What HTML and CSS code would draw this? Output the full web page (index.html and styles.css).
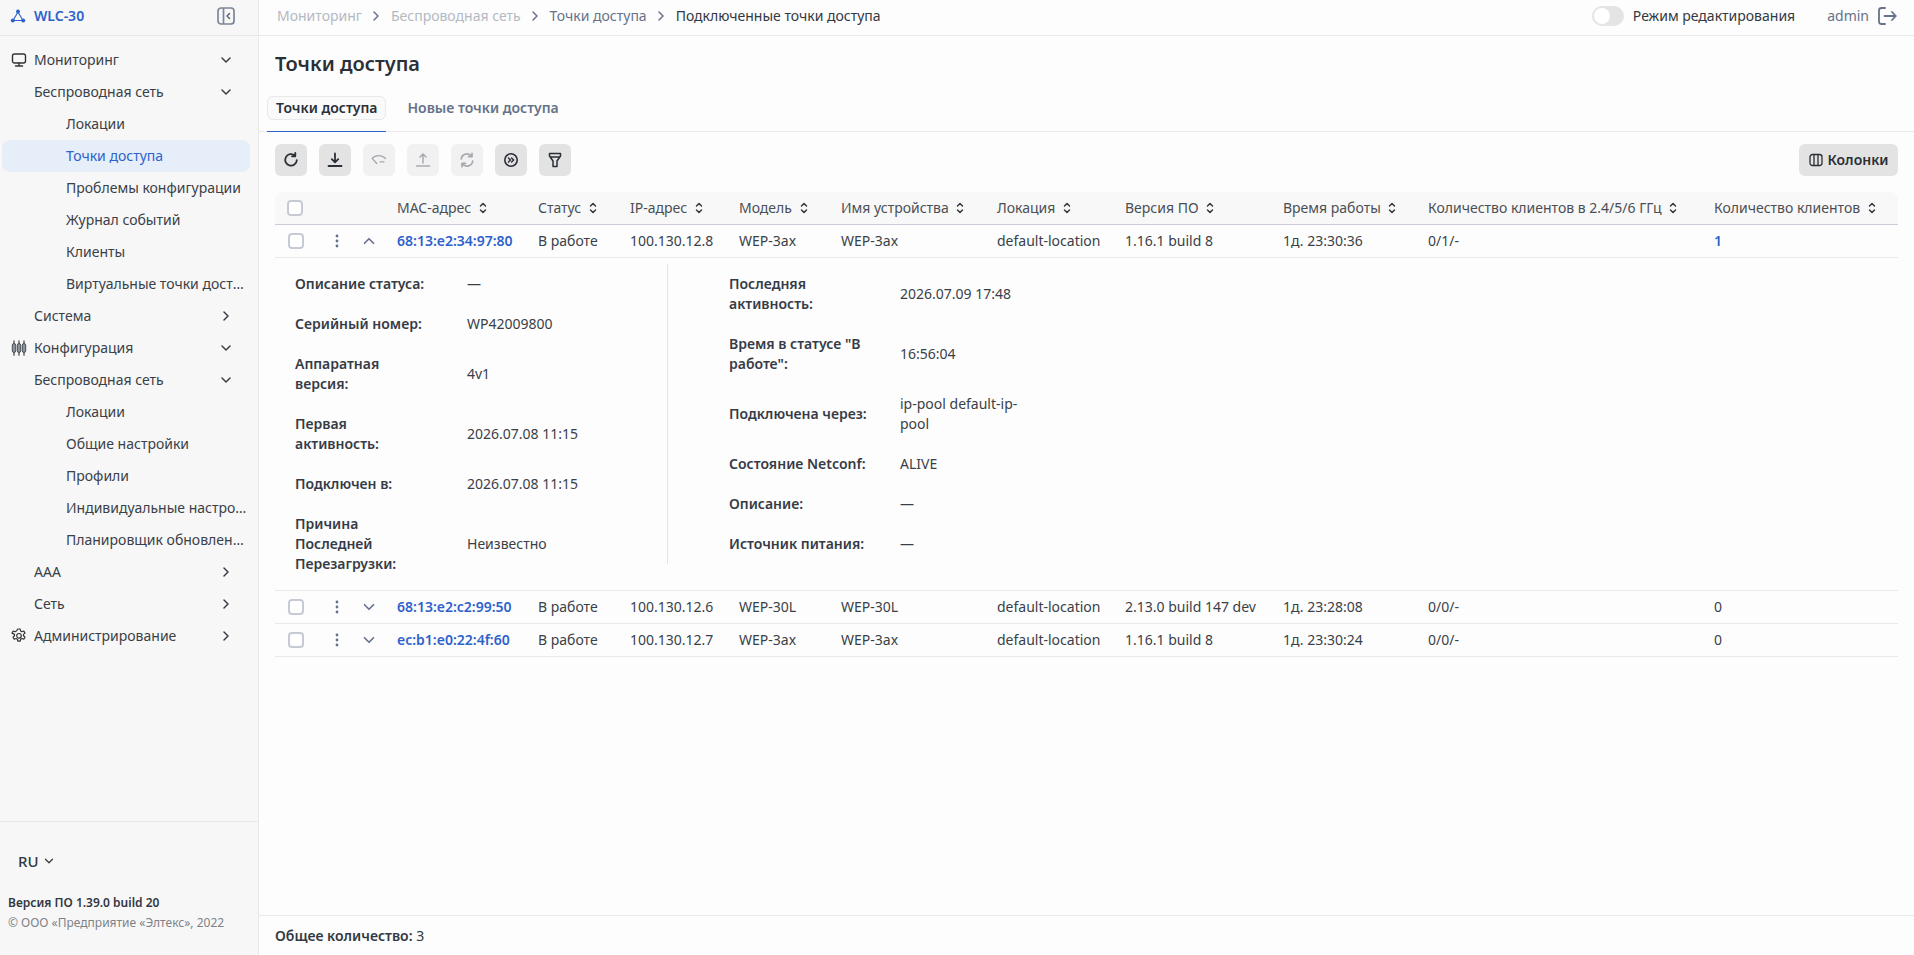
FILE: index.html
```html
<!DOCTYPE html>
<html lang="ru">
<head>
  <meta charset="UTF-8">
  <title>Точки доступа</title>
  <link rel="stylesheet" href="styles.css">
</head>
<body>
  <svg class="sprite" width="0" height="0">
    <symbol id="chev-down" viewBox="0 0 16 16"><path d="M4 6l4 4 4-4" fill="none" stroke="currentColor" stroke-width="1.5" stroke-linecap="round" stroke-linejoin="round"/></symbol>
    <symbol id="chev-right" viewBox="0 0 16 16"><path d="M6 4l4 4-4 4" fill="none" stroke="currentColor" stroke-width="1.5" stroke-linecap="round" stroke-linejoin="round"/></symbol>
    <symbol id="sort" viewBox="0 0 16 16"><path d="M5.500 6L8 3.500 10.500 6M5.500 10L8 12.500 10.500 10" fill="none" stroke="currentColor" stroke-width="1.500" stroke-linecap="round" stroke-linejoin="round"/></symbol>
    <symbol id="dots" viewBox="0 0 16 16"><circle cx="8" cy="3" r="1.400" fill="currentColor"/><circle cx="8" cy="8" r="1.400" fill="currentColor"/><circle cx="8" cy="13" r="1.400" fill="currentColor"/></symbol>
  </svg>

  <aside class="sidebar">
    <div class="side-top">
      <div class="brand">
        <svg width="16" height="16" viewBox="0 0 16 16"><path d="M8 4L3 12.500h10z" fill="none" stroke="#2d62cc" stroke-width="1.100"/><circle cx="8" cy="3.500" r="2" fill="#2d62cc"/><circle cx="2.800" cy="12.500" r="2" fill="#2d62cc"/><circle cx="13.200" cy="12.500" r="2" fill="#2d62cc"/></svg>
        <span>WLC-30</span>
      </div>
      <svg class="collapse" width="18" height="18" viewBox="0 0 18 18"><rect x="1" y="1" width="16" height="16" rx="3" fill="none" stroke="#7b8699" stroke-width="1.700"/><path d="M6.500 1v16" stroke="#7b8699" stroke-width="1.700"/><path d="M12.500 6.500L10 9l2.500 2.500" fill="none" stroke="#5a6475" stroke-width="1.500" stroke-linecap="round" stroke-linejoin="round"/></svg>
    </div>
    <nav class="menu">
      <div class="mi">
        <svg class="mi-icon" width="16" height="16" viewBox="0 0 16 16"><rect x="1.500" y="2" width="13" height="9" rx="2" fill="none" stroke="#333" stroke-width="1.400"/><path d="M8 11v3M4.500 14h7" stroke="#333" stroke-width="1.400" stroke-linecap="round"/></svg>
        <span class="mi-text">Мониторинг</span><svg class="chev"><use href="#chev-down"/></svg>
      </div>
      <div class="mi lvl2"><span class="mi-text">Беспроводная сеть</span><svg class="chev"><use href="#chev-down"/></svg></div>
      <div class="mi lvl3"><span class="mi-text">Локации</span></div>
      <div class="mi lvl3 active"><span class="mi-text">Точки доступа</span></div>
      <div class="mi lvl3"><span class="mi-text">Проблемы конфигурации</span></div>
      <div class="mi lvl3"><span class="mi-text">Журнал событий</span></div>
      <div class="mi lvl3"><span class="mi-text">Клиенты</span></div>
      <div class="mi lvl3"><span class="mi-text">Виртуальные точки доступа</span></div>
      <div class="mi lvl2"><span class="mi-text">Система</span><svg class="chev"><use href="#chev-right"/></svg></div>
      <div class="mi">
        <svg class="mi-icon" width="16" height="16" viewBox="0 0 16 16"><g stroke="#4a4f57" stroke-width="1.300" stroke-linecap="round"><path d="M3 .8v14.400M8 .8v14.400M13 .8v14.400"/></g><g fill="#8d929a" stroke="#4a4f57" stroke-width="1"><rect x="1.300" y="3.500" width="3.400" height="9" rx="1.700"/><rect x="6.300" y="3.500" width="3.400" height="9" rx="1.700"/><rect x="11.300" y="3.500" width="3.400" height="9" rx="1.700"/></g></svg>
        <span class="mi-text">Конфигурация</span><svg class="chev"><use href="#chev-down"/></svg>
      </div>
      <div class="mi lvl2"><span class="mi-text">Беспроводная сеть</span><svg class="chev"><use href="#chev-down"/></svg></div>
      <div class="mi lvl3"><span class="mi-text">Локации</span></div>
      <div class="mi lvl3"><span class="mi-text">Общие настройки</span></div>
      <div class="mi lvl3"><span class="mi-text">Профили</span></div>
      <div class="mi lvl3"><span class="mi-text">Индивидуальные настройки</span></div>
      <div class="mi lvl3"><span class="mi-text">Планировщик обновлений</span></div>
      <div class="mi lvl2"><span class="mi-text">AAA</span><svg class="chev"><use href="#chev-right"/></svg></div>
      <div class="mi lvl2"><span class="mi-text">Сеть</span><svg class="chev"><use href="#chev-right"/></svg></div>
      <div class="mi">
        <svg class="mi-icon" width="16" height="16" viewBox="0 0 16 16"><path d="M6.800 1h2.400l.4 2 1.300.7 1.900-.7 1.200 2.100-1.500 1.300v1.400l1.500 1.300-1.200 2.100-1.900-.7-1.300.7-.4 2H6.800l-.4-2-1.300-.7-1.900.7-1.200-2.100 1.500-1.300V6.400L1 5.100l1.200-2.100 1.900.7 1.300-.7z" fill="none" stroke="#333" stroke-width="1.200" stroke-linejoin="round"/><circle cx="8" cy="7.800" r="2.300" fill="none" stroke="#333" stroke-width="1.200"/></svg>
        <span class="mi-text">Администрирование</span><svg class="chev"><use href="#chev-right"/></svg>
      </div>
    </nav>
    <div class="side-bottom">
      <div class="lang">RU <svg class="chev"><use href="#chev-down"/></svg></div>
      <div class="version">Версия ПО 1.39.0 build 20</div>
      <div class="copy">© ООО «Предприятие «Элтекс», 2022</div>
    </div>
  </aside>

  <div class="main">
    <header class="topbar">
      <div class="crumbs">
        <span class="dim">Мониторинг</span><svg class="sep"><use href="#chev-right"/></svg>
        <span class="dim">Беспроводная сеть</span><svg class="sep"><use href="#chev-right"/></svg>
        <span class="mid">Точки доступа</span><svg class="sep"><use href="#chev-right"/></svg>
        <span>Подключенные точки доступа</span>
      </div>
      <div class="top-right">
        <span class="switch"><i></i></span>
        <span class="edit">Режим редактирования</span>
        <span class="user">admin</span>
        <svg width="20" height="20" viewBox="0 0 20 20"><path d="M8 2H4.500A2.500 2.500 0 0 0 2 4.500v11A2.500 2.500 0 0 0 4.500 18H8M7.500 10H18.800M15 6l3.800 4-3.800 4" fill="none" stroke="#66728a" stroke-width="1.800" stroke-linecap="round" stroke-linejoin="round"/></svg>
      </div>
    </header>

    <h1 class="title">Точки доступа</h1>

    <div class="tabs">
      <div class="tab on"><span>Точки доступа</span></div>
      <div class="tab"><span>Новые точки доступа</span></div>
    </div>

    <div class="toolbar">
      <button class="tool"><svg width="16" height="16" viewBox="0 0 16 16"><path d="M13.800 8.200A5.800 5.800 0 1 1 11.800 3.500M12.300 1v3.300H9" fill="none" stroke="#2b2f36" stroke-width="1.800" stroke-linecap="round" stroke-linejoin="round"/></svg></button>
      <button class="tool"><svg width="16" height="16" viewBox="0 0 16 16"><path d="M8 1.500v8.500M4.800 7.200L8 10.400l3.200-3.200M1.500 14h13" fill="none" stroke="#2b2f36" stroke-width="1.800" stroke-linecap="round" stroke-linejoin="round"/></svg></button>
      <button class="tool off"><svg width="16" height="16" viewBox="0 0 16 16"><path d="M1.200 6.500C4 2.800 10.500 2.300 14.500 6.500M1.200 6.500L5.800 11.500M9 9.800h4" fill="none" stroke="#a6aab0" stroke-width="1.300" stroke-linecap="round" stroke-linejoin="round"/></svg></button>
      <button class="tool off"><svg width="16" height="16" viewBox="0 0 16 16"><path d="M8 11V2M5 5l3-3 3 3M1.500 14h13" fill="none" stroke="#a6aab0" stroke-width="1.500" stroke-linecap="round" stroke-linejoin="round"/></svg></button>
      <button class="tool off"><svg width="16" height="16" viewBox="0 0 16 16"><path d="M2.300 7A5.700 5.700 0 0 1 12.600 4.300M13.700 9A5.700 5.700 0 0 1 3.400 11.700M13 1.300v3.400H9.600M3 14.700v-3.400h3.400" fill="none" stroke="#a6aab0" stroke-width="1.700" stroke-linecap="round" stroke-linejoin="round"/></svg></button>
      <button class="tool"><svg width="16" height="16" viewBox="0 0 16 16"><circle cx="8" cy="8" r="6.200" fill="none" stroke="#2b2f36" stroke-width="1.600"/><path d="M5.500 6L7.500 8l-2 2M8.600 6l2 2-2 2" fill="none" stroke="#2b2f36" stroke-width="1.500" stroke-linecap="round" stroke-linejoin="round"/></svg></button>
      <button class="tool"><svg width="16" height="16" viewBox="0 0 16 16"><path d="M2.500 1.500h11v2.500L10 9v5.500H6V9L2.500 4zM3 5h10" fill="none" stroke="#2b2f36" stroke-width="1.500" stroke-linejoin="round"/></svg></button>
      <button class="tool cols"><svg width="14" height="14" viewBox="0 0 14 14"><rect x="1" y="1.500" width="12" height="11" rx="2.500" fill="none" stroke="#2b2f36" stroke-width="1.300"/><path d="M5 1.500v11M9 1.500v11" stroke="#2b2f36" stroke-width="1.300"/></svg>Колонки</button>
    </div>

    <div class="table-wrap">
      <table class="grid">
        <colgroup>
          <col class="c-check"><col class="c-dots"><col class="c-exp"><col class="c-mac"><col class="c-status"><col class="c-ip"><col class="c-model"><col class="c-name"><col class="c-loc"><col class="c-ver"><col class="c-time"><col class="c-cl24"><col>
        </colgroup>
        <thead>
          <tr>
            <th class="cb-cell"><span class="cb"></span></th><th></th><th></th>
            <th>MAC-адрес <svg class="s"><use href="#sort"/></svg></th>
            <th>Статус <svg class="s"><use href="#sort"/></svg></th>
            <th>IP-адрес <svg class="s"><use href="#sort"/></svg></th>
            <th>Модель <svg class="s"><use href="#sort"/></svg></th>
            <th>Имя устройства <svg class="s"><use href="#sort"/></svg></th>
            <th>Локация <svg class="s"><use href="#sort"/></svg></th>
            <th>Версия ПО <svg class="s"><use href="#sort"/></svg></th>
            <th>Время работы <svg class="s"><use href="#sort"/></svg></th>
            <th>Количество клиентов в 2.4/5/6 ГГц <svg class="s"><use href="#sort"/></svg></th>
            <th>Количество клиентов <svg class="s"><use href="#sort"/></svg></th>
          </tr>
        </thead>
        <tbody>
          <tr>
            <td class="cb-cell"><span class="cb"></span></td>
            <td class="ic"><svg class="dots"><use href="#dots"/></svg></td>
            <td class="ic"><svg class="exp up"><use href="#chev-down"/></svg></td>
            <td><a class="mac">68:13:e2:34:97:80</a></td><td>В работе</td><td>100.130.12.8</td><td>WEP-3ax</td><td>WEP-3ax</td><td>default-location</td><td>1.16.1 build 8</td><td>1д. 23:30:36</td><td>0/1/-</td><td><a class="num">1</a></td>
          </tr>
          <tr>
            <td colspan="13" class="detail-cell">
              <div class="detail">
                <dl class="props left">
                  <dt>Описание статуса:</dt><dd>—</dd>
                  <dt>Серийный номер:</dt><dd>WP42009800</dd>
                  <dt>Аппаратная версия:</dt><dd>4v1</dd>
                  <dt>Первая активность:</dt><dd>2026.07.08 11:15</dd>
                  <dt>Подключен в:</dt><dd>2026.07.08 11:15</dd>
                  <dt>Причина Последней Перезагрузки:</dt><dd>Неизвестно</dd>
                </dl>
                <dl class="props right">
                  <dt>Последняя активность:</dt><dd>2026.07.09 17:48</dd>
                  <dt>Время в статусе "В работе":</dt><dd>16:56:04</dd>
                  <dt>Подключена через:</dt><dd>ip-pool default-ip-pool</dd>
                  <dt>Состояние Netconf:</dt><dd>ALIVE</dd>
                  <dt>Описание:</dt><dd>—</dd>
                  <dt>Источник питания:</dt><dd>—</dd>
                </dl>
              </div>
            </td>
          </tr>
          <tr>
            <td class="cb-cell"><span class="cb"></span></td>
            <td class="ic"><svg class="dots"><use href="#dots"/></svg></td>
            <td class="ic"><svg class="exp"><use href="#chev-down"/></svg></td>
            <td><a class="mac">68:13:e2:c2:99:50</a></td><td>В работе</td><td>100.130.12.6</td><td>WEP-30L</td><td>WEP-30L</td><td>default-location</td><td>2.13.0 build 147 dev</td><td>1д. 23:28:08</td><td>0/0/-</td><td>0</td>
          </tr>
          <tr>
            <td class="cb-cell"><span class="cb"></span></td>
            <td class="ic"><svg class="dots"><use href="#dots"/></svg></td>
            <td class="ic"><svg class="exp"><use href="#chev-down"/></svg></td>
            <td><a class="mac">ec:b1:e0:22:4f:60</a></td><td>В работе</td><td>100.130.12.7</td><td>WEP-3ax</td><td>WEP-3ax</td><td>default-location</td><td>1.16.1 build 8</td><td>1д. 23:30:24</td><td>0/0/-</td><td>0</td>
          </tr>
        </tbody>
      </table>
    </div>

    <footer class="total"><b>Общее количество:</b> 3</footer>
  </div>
</body>
</html>
```

FILE: styles.css
```css
* {
  box-sizing: border-box;
}
html, body {
  height: 100%;
}
body {
  margin: 0;
  display: flex;
  height: 955px;
  overflow: hidden;
  font-family: "Noto Sans", Arial, sans-serif;
  font-size: 14px;
  line-height: 20px;
  color: #333842;
  background-color: #fdfdfd;
}
.sprite {
  position: absolute;
}

/* sidebar */
.sidebar {
  width: 259px;
  flex: none;
  display: flex;
  flex-direction: column;
  background-color: #f7f7f7;
  border-right: 1px solid #e9e9e9;
}
.side-top {
  height: 36px;
  flex: none;
  display: flex;
  align-items: center;
  justify-content: space-between;
  padding: 0 23px 3px 10px;
  border-bottom: 1px solid #e9e9e9;
}
.brand {
  display: flex;
  align-items: center;
  gap: 8px;
  font-weight: 600;
  color: #2d62cc;
}
.menu {
  flex: 1;
  padding: 8px 8px 0 2px;
}
.mi {
  height: 32px;
  display: flex;
  align-items: center;
  padding: 0 16px 0 32px;
  position: relative;
  border-radius: 8px;
  color: #3a3f48;
}
.mi-icon {
  position: absolute;
  left: 9px;
  top: 8px;
}
.mi-text {
  flex: 1;
  min-width: 0;
  white-space: nowrap;
  overflow: hidden;
  text-overflow: ellipsis;
}
.lvl3 {
  padding-left: 64px;
  padding-right: 3px;
}
.active {
  background-color: #e6eef9;
}
.active .mi-text {
  color: #2d62cc;
}
.chev {
  width: 16px;
  height: 16px;
  flex: none;
  color: #3a3f45;
}
.side-bottom {
  height: 134px;
  flex: none;
  padding: 27px 8px 0;
  border-top: 1px solid #e9e9e9;
}
.lang {
  display: flex;
  align-items: center;
  gap: 3px;
  height: 24px;
  padding-left: 10px;
  font-size: 15px;
  font-weight: 500;
}
.lang .chev {
  width: 14px;
  height: 14px;
}
.version {
  margin-top: 20px;
  font-size: 12px;
  font-weight: 600;
}
.copy {
  margin-top: 0;
  font-size: 12px;
  color: #7d8288;
}

/* main */
.main {
  flex: 1;
  min-width: 0;
  display: flex;
  flex-direction: column;
}
.topbar {
  height: 36px;
  flex: none;
  display: flex;
  align-items: center;
  justify-content: space-between;
  padding: 0 17px 3px 18px;
  border-bottom: 1px solid #e9e9e9;
}
.crumbs {
  display: flex;
  align-items: center;
}
.dim {
  color: #b4b9c2;
}
.mid {
  color: #66728a;
}
.sep {
  width: 16px;
  height: 16px;
  margin: 0 6.5px;
  color: #66728a;
}
.top-right {
  display: flex;
  align-items: center;
}
.switch {
  width: 32px;
  height: 20px;
  border-radius: 10px;
  background-color: #e4e4e4;
  padding: 2px;
  margin-right: 9px;
}
.switch i {
  display: block;
  width: 16px;
  height: 16px;
  border-radius: 50%;
  background-color: #fff;
}
.edit {
  margin-right: 32px;
}
.user {
  color: #66728a;
  margin-right: 8px;
}
.title {
  margin: 14px 0 0 16px;
  font-size: 20px;
  line-height: 28px;
  font-weight: 600;
  color: #2b2f36;
}
.tabs {
  display: flex;
  margin-top: 17px;
  padding-left: 8px;
  height: 37px;
  flex: none;
  border-bottom: 1px solid #e9e9e9;
}
.tab {
  height: 37px;
  padding: 1px 0 0;
  margin-right: 12px;
}
.tab span {
  display: block;
  height: 24px;
  padding: 1px 8px;
  font-size: 14px;
  font-weight: 600;
  color: #66728a;
  border: 1px solid transparent;
  border-radius: 6px;
}
.tab.on {
  border-bottom: 1px solid #2d62cc;
}
.tab.on span {
  color: #2b2f36;
  background-color: #fafafa;
  border-color: #e9e9e9;
}
.toolbar {
  display: flex;
  gap: 12px;
  margin-top: 12px;
  padding: 0 16px;
  flex: none;
}
.tool {
  width: 32px;
  height: 32px;
  padding: 0;
  display: flex;
  align-items: center;
  justify-content: center;
  border: none;
  border-radius: 6px;
  background-color: #e3e3e3;
  font: inherit;
}
.tool.off {
  background-color: #f1f1f1;
}
.tool.cols {
  width: 99px;
  margin-left: auto;
  gap: 5px;
  font-weight: 600;
  color: #2b2f36;
}

/* table */
.table-wrap {
  flex: 1;
  margin-top: 16px;
  padding: 0 16px;
}
.grid {
  width: 100%;
  table-layout: fixed;
  border-collapse: collapse;
}
.c-check { width: 46px; }
.c-dots { width: 32px; }
.c-exp { width: 36px; }
.c-mac { width: 141px; }
.c-status { width: 92px; }
.c-ip { width: 109px; }
.c-model { width: 102px; }
.c-name { width: 156px; }
.c-loc { width: 128px; }
.c-ver { width: 158px; }
.c-time { width: 145px; }
.c-cl24 { width: 286px; }
.grid th {
  height: 32px;
  padding: 0 8px;
  text-align: left;
  font-weight: 400;
  color: #4b4f55;
  background-color: #f8f8f8;
  border-bottom: 1px solid #c9ced8;
  white-space: nowrap;
}
.grid thead th:first-child {
  border-top-left-radius: 8px;
}
.grid thead th:last-child {
  border-top-right-radius: 8px;
}
.grid td {
  height: 33px;
  padding: 0 8px;
  border-bottom: 1px solid #e9e9e9;
  white-space: nowrap;
  color: #3a3f48;
}
.s {
  width: 16px;
  height: 16px;
  vertical-align: -3px;
  color: #33373d;
}
.cb-cell {
  padding-left: 13px !important;
}
th.cb-cell {
  padding-left: 12px !important;
}
.cb {
  display: block;
  width: 16px;
  height: 16px;
  border: 2px solid #c6cad4;
  border-radius: 4px;
  background-color: #fff;
}
.ic {
  padding: 0 !important;
}
.ic svg {
  display: block;
  color: #66728a;
}
.dots {
  width: 16px;
  height: 16px;
  margin-left: 8px;
}
.exp {
  width: 18px;
  height: 18px;
  margin-left: 7px;
}
.exp.up {
  transform: rotate(180deg);
}
.mac {
  color: #2d62cc;
  font-weight: 600;
}
.num {
  color: #2d62cc;
  font-weight: 600;
}
.grid td.detail-cell {
  padding: 6px 0 6px 20px;
  height: auto;
  white-space: normal;
}
.detail {
  display: flex;
  align-items: flex-start;
}
.props {
  margin: 0;
  display: grid;
  grid-template-columns: 172px 140px;
  align-items: center;
}
.props dt {
  width: 138px;
  padding: 10px 0;
  font-weight: 600;
  color: #363b46;
}
.props dd {
  margin: 0;
  padding: 10px 0;
  color: #3a3f48;
}
.left {
  width: 372px;
}
.right {
  grid-template-columns: 171px 140px;
  padding-left: 61px;
  border-left: 1px solid #e4e4e4;
}
.total {
  height: 40px;
  flex: none;
  padding: 10px 16px 0;
  border-top: 1px solid #e9e9e9;
}
.total b {
  font-weight: 600;
}
```
